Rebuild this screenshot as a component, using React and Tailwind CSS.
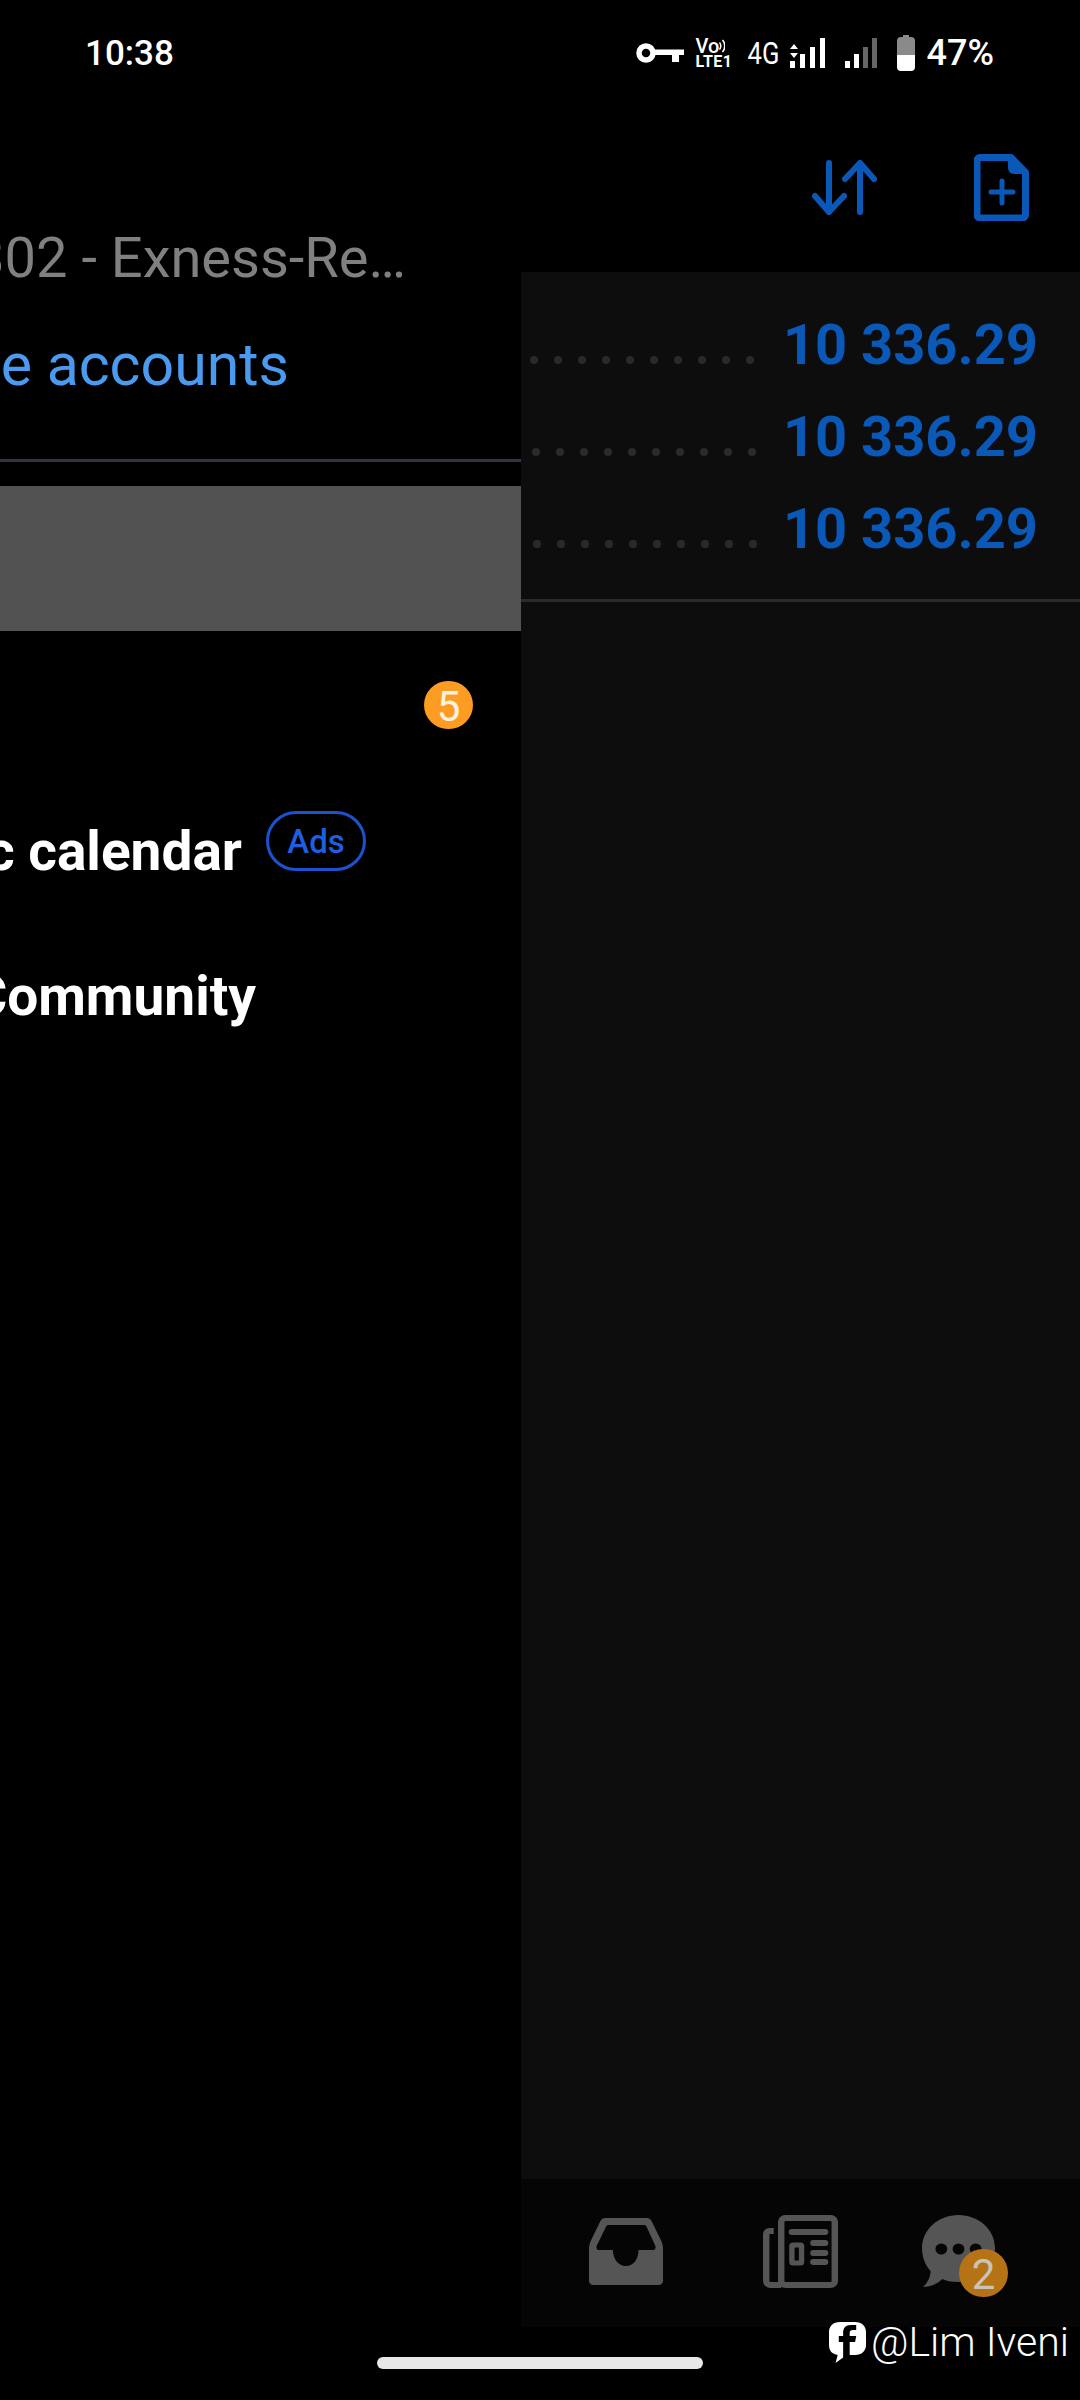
const BLUE = "#0a58b8";

function KeyIcon() {
  return (
    <svg width="48" height="20" viewBox="0 0 48 20" fill="none">
      <circle cx="10" cy="10" r="7" stroke="white" strokeWidth="5.5" />
      <path d="M18 6.500h30v5.500h-5v7h-7v-7H18z" fill="white" />
    </svg>
  );
}

function SignalIcon({ dim = 0, arrows = false, gap = "gap-[4px]" }) {
  const heights = [7, 14, 21, 30];
  return (
    <div className={`relative flex h-[30px] items-end ${gap}`}>
      {arrows && (
        <svg className="absolute left-0 top-[6px]" width="8" height="14" viewBox="0 0 8 14" fill="white">
          <path d="M4 0l4 5H0zM4 14L0 9h8z" />
        </svg>
      )}
      {heights.map((h, i) => (
        <div
          key={i}
          className={i >= heights.length - dim ? "w-[5px] bg-[#666666]" : "w-[5px] bg-white"}
          style={{ height: h }}
        />
      ))}
    </div>
  );
}

function StatusBar() {
  return (
    <div className="flex h-[106px] shrink-0 items-center justify-between pl-[85px] pr-[86px] text-white">
      <span className="text-[35px] font-medium leading-none">10:38</span>
      <div className="flex items-center">
        <KeyIcon />
        <div className="relative ml-[12px] flex h-[30px] w-[38px] flex-col leading-none">
          <span className="text-[20px] font-medium leading-[17px]">Vo</span>
          <span className="text-[16px] font-bold leading-[13px] tracking-[0.5px]">LTE1</span>
          <svg className="absolute right-[9px] top-[1px]" width="6" height="14" viewBox="0 0 6 14" fill="none" stroke="white" strokeWidth="1.5">
            <path d="M0.500 3.500c1.500 2 1.500 5 0 7M3.500 1c3 3.500 3 8.500 0 12" />
          </svg>
        </div>
        <span className="ml-[10px] w-[36px] origin-center scale-x-[0.8] text-center text-[32px] leading-none">4G</span>
        <div className="ml-[10px]">
          <SignalIcon arrows gap="gap-[5px]" />
        </div>
        <div className="ml-[20px]">
          <SignalIcon dim={2} />
        </div>
        <svg className="ml-[20px]" width="18" height="36" viewBox="0 0 18 36">
          <path d="M6 0h6v2h2a4 4 0 0 1 4 4v14H0V6a4 4 0 0 1 4-4h2z" fill="#8a8a8a" />
          <path d="M0 20h18v12a4 4 0 0 1-4 4H4a4 4 0 0 1-4-4z" fill="white" />
        </svg>
        <span className="ml-[12px] text-[36px] font-medium leading-none">47%</span>
      </div>
    </div>
  );
}

function Drawer() {
  return (
    <div className="flex w-[521px] shrink-0 flex-col overflow-hidden">
      <div className="mt-[120px] flex h-[64px] justify-end whitespace-nowrap pr-[115px] text-[56px] leading-[64px] text-[#808080]">
        <span className="shrink-0">302 - Exness-Re…</span>
      </div>
      <div className="mt-[43px] flex h-[64px] justify-end whitespace-nowrap pr-[232px] text-[59px] leading-[64px] text-[#4a9bf0]">
        <span className="shrink-0">Manage accounts</span>
      </div>
      <div className="mt-[62px] h-[3px] bg-[#33334a]" />
      <div className="mt-[24px] h-[145px] bg-[#525252]" />
      <div className="mt-[50px] flex justify-end pr-[48px]">
        <div className="flex h-[48px] w-[49px] items-center justify-center rounded-full bg-[#fc9c22] pt-[3px] text-[42px] leading-none text-[#fff3e0]">
          5
        </div>
      </div>
      <div className="mt-[90px] flex h-[64px] items-start justify-end gap-[24px] whitespace-nowrap pr-[155px] text-[55px] font-bold leading-[64px] text-white">
        <span className="shrink-0">Economic calendar</span>
        <div className="-mt-[8px] flex h-[60px] w-[100px] shrink-0 items-center justify-center rounded-full border-[3px] border-[#1c52d0] text-[33px] font-medium leading-none text-[#1e5fe0]">
          Ads
        </div>
      </div>
      <div className="mt-[81px] flex h-[64px] justify-end whitespace-nowrap pr-[265px] text-[55px] font-bold leading-[64px] text-white">
        <span className="shrink-0">MQL5 Community</span>
      </div>
    </div>
  );
}

function Toolbar() {
  return (
    <div className="flex h-[166px] shrink-0 items-start justify-end pr-[51px] pt-[48px]">
      <svg className="mt-[6px]" width="65" height="55" viewBox="0 0 65 55" fill="none" stroke={BLUE} strokeWidth="6" strokeLinecap="round" strokeLinejoin="round">
        <path d="M17 3v49M3 36l14 16 15-16" />
        <path d="M48 52V3M33 19L48 3l14 16" />
      </svg>
      <svg className="ml-[97px]" width="55" height="67" viewBox="0 0 55 67" fill="none">
        <path d="M6 3.500h31l14.500 15v42.500a3 3 0 0 1-3 3H6a3 3 0 0 1-3-3V6.500a3 3 0 0 1 3-3z" stroke={BLUE} strokeWidth="7" strokeLinejoin="round" />
        <path d="M34 3l18 17H40a6 6 0 0 1-6-6z" fill={BLUE} />
        <path d="M28 27v22M17 38h22" stroke={BLUE} strokeWidth="5" strokeLinecap="round" />
      </svg>
    </div>
  );
}

function BalanceRow({ pad }) {
  const dots = [0, 1, 2, 3, 4, 5, 6, 7, 8, 9];
  return (
    <div className="flex h-[92px] items-start justify-between pr-[42px]">
      <div className="mt-[57px] flex gap-[16px]" style={{ paddingLeft: pad }}>
        {dots.map((d) => (
          <div key={d} className="h-[8px] w-[8px] rounded-full bg-[#2a2a2a]" />
        ))}
      </div>
      <span className="mt-[14px] text-[56px] font-bold leading-[64px] text-[#0a58b8]">10 336.29</span>
    </div>
  );
}

function InboxIcon() {
  return (
    <svg width="74" height="67" viewBox="0 0 68 67" preserveAspectRatio="none">
      <path
        fillRule="evenodd"
        fill="#555555"
        d="M15 0h38c2 0 3.500 1 4.500 3L66 22c1.500 3 2 6 2 9v32a4 4 0 0 1-4 4H4a4 4 0 0 1-4-4V31c0-3 .5-6 2-9l8.500-19C11.500 1 13 0 15 0zM18 7c-1 0-2 .5-2.500 2L7 28c-.5 1.500 0 4 2 4h13c0 9 5 16 12 16s11.500-7 11.500-16H59c2 0 2.500-2.500 2-4L53 9c-.5-1.500-1.500-2-2.500-2z"
      />
    </svg>
  );
}

function NewsIcon() {
  return (
    <svg width="75" height="73" viewBox="0 0 70 73" fill="none" stroke="#555555" preserveAspectRatio="none">
      <rect x="17" y="3" width="50" height="67" rx="4" strokeWidth="6" />
      <path d="M10 16H6a3 3 0 0 0-3 3v47a4 4 0 0 0 4 4h10" strokeWidth="6" />
      <path d="M27 17h31M47 28h11M47 38h11M47 47h11" strokeWidth="6" strokeLinecap="round" />
      <rect x="27" y="30" width="9" height="18" rx="1" strokeWidth="5" />
    </svg>
  );
}

function ChatIcon() {
  return (
    <div className="relative h-[73px] w-[73px]">
      <svg width="73" height="73" viewBox="0 0 68 73" preserveAspectRatio="none">
        <path d="M34 0c19 0 34 15 34 33S53 67 34 67c-7 0-12-1-15-3-4 4-10 8-18 8 4-4 7-10 7-16C3 50 0 42 0 33 0 15 15 0 34 0z" fill="#555555" />
        <circle cx="18" cy="34" r="5.500" fill="#050505" />
        <circle cx="34" cy="34" r="5.500" fill="#050505" />
        <circle cx="50" cy="34" r="5.500" fill="#050505" />
      </svg>
      <div className="absolute left-[37px] top-[34px] flex h-[48px] w-[49px] items-center justify-center rounded-full bg-[#b57316] pt-[3px] text-[42px] leading-none text-[#c9c3b8]">
        2
      </div>
    </div>
  );
}

function Watermark() {
  return (
    <div className="absolute right-[11px] top-[2322px] flex h-[41px] items-center text-white">
      <svg width="37" height="41" viewBox="0 0 34 41" preserveAspectRatio="none">
        <path d="M10 0h14c6 0 10 4 10 10v13c0 6-4 10-10 10h-6l-3 1-9 7 2-8c-5-1-8-4-8-10V10C0 4 4 0 10 0z" fill="white" />
        <path d="M19 35V20h5l1-6h-6v-3c0-2 1-3 3-3h3V3h-5c-5 0-7 3-7 8v3H9v6h4v17z" fill="black" />
      </svg>
      <span className="ml-[5px] text-[41px] font-light leading-none">@Lim Iveni</span>
    </div>
  );
}

export default function App() {
  return (
    <div className="relative flex h-[2400px] w-[1080px] flex-col overflow-hidden bg-black font-[Roboto,sans-serif]">
      <StatusBar />
      <div className="flex h-[2221px] shrink-0">
        <Drawer />
        <div className="flex flex-1 flex-col">
          <Toolbar />
          <div className="flex-1 bg-[#0d0d0d]">
            <div className="h-[330px] border-b-[3px] border-[#2a2a2a] pt-[27px]">
              <BalanceRow pad={9} />
              <BalanceRow pad={11} />
              <BalanceRow pad={12} />
            </div>
          </div>
          <div className="flex h-[148px] shrink-0 items-start bg-[#050505] pl-[68px] pt-[36px]">
            <div className="mt-[3px]">
              <InboxIcon />
            </div>
            <div className="ml-[100px]">
              <NewsIcon />
            </div>
            <div className="ml-[84px]">
              <ChatIcon />
            </div>
          </div>
        </div>
      </div>
      <div className="flex flex-1 justify-center pt-[30px]">
        <div className="h-[12px] w-[326px] rounded-full bg-[#e8e8e8]" />
      </div>
      <Watermark />
    </div>
  );
}
